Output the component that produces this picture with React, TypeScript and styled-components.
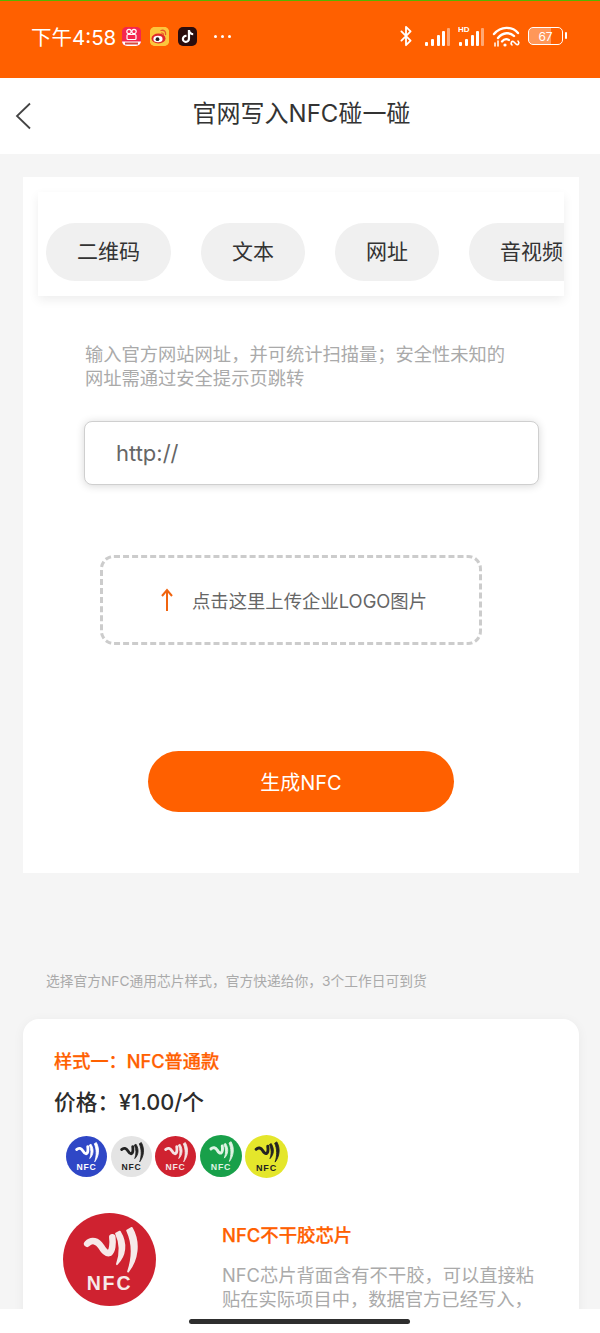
import styled, { createGlobalStyle } from "styled-components";
import { FaTiktok } from "react-icons/fa";
import { Bluetooth } from "lucide-react";

const GlobalStyle = createGlobalStyle`
  html, body {
    margin: 0;
    padding: 0;
    background: #f5f5f5;
  }
  * {
    box-sizing: border-box;
  }
  body {
    font-family: "Inter", "Noto Sans CJK SC", sans-serif;
  }
`;

const orange = "#ff6000";

const Page = styled.div`
  position: relative;
  width: 600px;
  height: 1333px;
  overflow: hidden;
  background: #f5f5f5;
`;

// status bar
const StatusBar = styled.div`
  height: 78px;
  background: ${orange};
  border-top: 1px solid #57b400;
  padding: 0 35px 7px 31px;
  display: flex;
  align-items: center;
  justify-content: space-between;
  color: #fff;
`;
const StatusLeft = styled.div`
  display: flex;
  align-items: center;
`;
const Time = styled.span`
  font-size: 20.5px;
  width: 91px;
  white-space: nowrap;
`;
const AppIcon = styled.div<{ $bg: string; $color: string }>`
  position: relative;
  overflow: hidden;
  width: 19px;
  height: 19px;
  border-radius: 5px;
  margin-right: 9px;
  background: ${(p) => p.$bg};
  color: ${(p) => p.$color};
  display: flex;
  align-items: center;
  justify-content: center;
  font-size: 13px;
`;
const More = styled.span`
  margin-left: 8px;
  display: flex;
  gap: 4px;
  i {
    width: 3px;
    height: 3px;
    border-radius: 50%;
    background: #fff;
  }
`;
const StatusRight = styled.div`
  display: flex;
  align-items: center;
  gap: 7px;
`;
const Battery = styled.div`
  width: 35px;
  height: 18px;
  border: 1.5px solid #fff;
  border-radius: 5px;
  position: relative;
  display: flex;
  align-items: center;
  justify-content: center;
  font-size: 12px;
  margin-right: 2px;
  background: linear-gradient(90deg, rgba(255, 255, 255, 0.35) 67%, transparent 67%);
  &::after {
    content: "";
    position: absolute;
    right: -5px;
    top: 4px;
    width: 2.5px;
    height: 7px;
    border-radius: 1px;
    background: #fff;
  }
`;

// nav
const NavBar = styled.div`
  position: relative;
  height: 76px;
  background: #fff;
  display: flex;
  align-items: center;
  justify-content: center;
`;
const BackIcon = styled.svg`
  position: absolute;
  left: 15px;
  top: 24px;
`;
const NavTitle = styled.h1`
  margin: 0 0 9px 3px;
  font-size: 24px;
  font-weight: 400;
  color: #333;
`;

// main card
const MainCard = styled.div`
  margin: 23px 21px 0 23px;
  height: 696px;
  background: #fff;
  padding: 15px 15px 0;
`;
const TabBar = styled.div`
  height: 104px;
  padding: 31px 0 0 8px;
  display: flex;
  gap: 30px;
  overflow: hidden;
  background: #fff;
  box-shadow: 0 4px 10px rgba(0, 0, 0, 0.07);
`;
const Tab = styled.div`
  flex: none;
  height: 58px;
  padding: 0 31px 4px;
  border-radius: 29px;
  background: #f0f0f0;
  color: #333;
  font-size: 21px;
  display: flex;
  align-items: center;
`;
const Hint = styled.p`
  margin: 46px 0 0 47px;
  width: 430px;
  font-size: 18.28px;
  line-height: 24px;
  color: #aaa;
`;
const UrlInput = styled.div`
  margin: 31px 0 0 46px;
  width: 455px;
  height: 64px;
  padding: 0 0 0 31px;
  border: 1px solid #cfcfcf;
  border-radius: 8px;
  background: #fff;
  box-shadow: 0 1px 8px rgba(0, 0, 0, 0.16);
  display: flex;
  align-items: center;
  font-size: 22px;
  color: #666;
`;
const UploadBox = styled.div`
  margin: 70px 0 0 62px;
  width: 382px;
  height: 90px;
  border: 3px dashed #cccccc;
  border-radius: 14px;
  padding-left: 58px;
  display: flex;
  align-items: center;
  gap: 19px;
  font-size: 18.35px;
  color: #666;
`;
const SubmitButton = styled.div`
  margin: 106px 0 0 110px;
  width: 306px;
  height: 61px;
  border-radius: 31px;
  background: ${orange};
  color: #fff;
  font-size: 20px;
  display: flex;
  align-items: center;
  justify-content: center;
`;

// product section
const Caption = styled.p`
  margin: 97px 0 0 46px;
  font-size: 13.75px;
  line-height: 22px;
  color: #aaa;
`;
const ProductCard = styled.div`
  margin: 27px 21px 0 23px;
  height: 400px;
  padding: 30px 18px 0 31px;
  background: #fff;
  border-radius: 16px;
  box-shadow: 0 2px 12px rgba(0, 0, 0, 0.05);
`;
const StyleName = styled.div`
  font-size: 18.2px;
  line-height: 24px;
  font-weight: 500;
  color: ${orange};
  -webkit-text-stroke: 0.25px ${orange};
`;
const Price = styled.div`
  margin-top: 14px;
  font-size: 21.7px;
  line-height: 30px;
  font-weight: 500;
  color: #2c2c2c;
`;
const Swatches = styled.div`
  margin: 17px 0 0 12px;
  height: 44px;
  display: flex;
  align-items: center;
  gap: 3.5px;
`;
const ProductRow = styled.div`
  margin-top: 35px;
  display: flex;
`;
const ProductPhoto = styled.div`
  flex: none;
  margin-left: 9px;
  width: 159px;
`;
const ProductInfo = styled.div`
  width: 316px;
  padding-top: 10px;
`;
const ProductName = styled.div`
  font-size: 18.4px;
  line-height: 24px;
  font-weight: 500;
  color: ${orange};
  -webkit-text-stroke: 0.25px ${orange};
`;
const ProductDesc = styled.p`
  margin: 16px 0 0;
  font-size: 18.3px;
  line-height: 24px;
  color: #aaa;
`;

// bottom gesture bar
const HomeBar = styled.div`
  position: absolute;
  left: 0;
  right: 0;
  bottom: 0;
  height: 24px;
  background: #fff;
  display: flex;
  justify-content: center;
  padding: 10px 1px 0 0;
`;
const HomeIndicator = styled.div`
  width: 221px;
  height: 5px;
  border-radius: 3px;
  background: #2e2e2e;
`;

function SignalIcon({ hd }: { hd?: boolean }) {
  return (
    <svg width="27" height="24" viewBox="0 0 27 24">
      {hd && (
        <text x="0" y="8" fontSize="8" fontWeight="700" fill="#fff" fontFamily="Liberation Sans, sans-serif">
          HD
        </text>
      )}
      <rect x="1" y="18" width="3" height="4" rx="1" fill="#fff" />
      <rect x="7" y="15" width="3" height="7" rx="1" fill="#fff" />
      <rect x="13" y="11" width="3" height="11" rx="1" fill="#fff" />
      <rect x="18" y="7" width="3" height="15" rx="1" fill="#fff" />
      <rect x="23" y="4" width="3" height="18" rx="1" fill="#fff" opacity="0.45" />
    </svg>
  );
}

function WifiIcon() {
  return (
    <svg width="29" height="24" viewBox="0 0 29 24" fill="none" stroke="#fff" strokeLinecap="round">
      <path d="M2 10C9 2 20 2 26 9" strokeWidth="2.4" />
      <path d="M6 14C11 8 18 8 22 12" strokeWidth="2.4" />
      <path d="M10 17.5C12 15 15 15 17 16" strokeWidth="2.2" />
      <circle cx="13" cy="21" r="1.6" fill="#fff" stroke="none" />
      <path d="M3 22v-3M6 22v-5" strokeWidth="1.5" />
      <path d="M20 21c-2-2 0-5 2-3l2 2c2 2 4-1 2-3" strokeWidth="1.6" />
    </svg>
  );
}

function KuaiIcon() {
  return (
    <svg width="19" height="19" viewBox="0 0 19 19">
      <rect width="19" height="19" fill="#f4264f" />
      <circle cx="7" cy="4.5" r="2.2" fill="none" stroke="#fff" strokeWidth="1.2" />
      <circle cx="12" cy="4.5" r="2.2" fill="none" stroke="#fff" strokeWidth="1.2" />
      <rect x="5" y="7.5" width="9" height="5" rx="1" fill="none" stroke="#fff" strokeWidth="1.2" />
      <rect x="0" y="14.5" width="19" height="4.5" fill="#fff" />
      <rect x="3" y="15.5" width="13" height="2" fill="#d94a3c" />
    </svg>
  );
}

function WeiboIcon() {
  return (
    <svg width="19" height="19" viewBox="0 0 19 19">
      <rect width="19" height="19" fill="#fcc63d" />
      <path d="M11 3.5c3-1 5 1.2 4.6 4" fill="none" stroke="#e8572a" strokeWidth="1.3" strokeLinecap="round" />
      <path d="M11.5 6c1.3-.3 2 .6 1.9 1.8" fill="none" stroke="#e8572a" strokeWidth="1.1" strokeLinecap="round" />
      <ellipse cx="8.5" cy="11.5" rx="7" ry="5" fill="#e02a2a" />
      <ellipse cx="8" cy="12" rx="4.6" ry="3.3" fill="#fff" />
      <circle cx="7.5" cy="12.2" r="1.9" fill="#222" />
    </svg>
  );
}

function NfcBadge({ size, bg, fg }: { size: number; bg: string; fg: string }) {
  return (
    <svg width={size} height={size} viewBox="0 0 100 100">
      <circle cx="50" cy="50" r="50" fill={bg} />
      <path
        d="M26 33C31 28 37 30 41 36C44 41 47 44 50 43C53 41 54 33 53 26"
        fill="none"
        stroke={fg}
        strokeWidth="7"
        strokeLinecap="round"
      />
      <g fill={fg} stroke={fg} strokeWidth="2" strokeLinejoin="round">
        <path d="M61 20C69 33 67 46 58 55C62 44 62 33 57 22Z" />
        <path d="M74 16C83 32 80 50 70 63C75 48 75 32 69 19Z" />
      </g>
      <text
        x="50"
        y="83"
        textAnchor="middle"
        fontSize="21"
        fontWeight="700"
        letterSpacing="2"
        fill={fg}
        fontFamily="Liberation Sans, sans-serif"
      >
        NFC
      </text>
    </svg>
  );
}

const badges = [
  { bg: "#2f47c6", fg: "#fff", size: 41 },
  { bg: "#e4e4e4", fg: "#222", size: 41 },
  { bg: "#cf2230", fg: "#f4e4e4", size: 41 },
  { bg: "#18a04a", fg: "#dff3e4", size: 42 },
  { bg: "#e4e62b", fg: "#222", size: 43 },
];

const tabs = ["二维码", "文本", "网址", "音视频"];

function App() {
  return (
    <Page>
      <GlobalStyle />
      <StatusBar>
        <StatusLeft>
          <Time>下午4:58</Time>
          <AppIcon $bg="#f4264f" $color="#fff">
            <KuaiIcon />
          </AppIcon>
          <AppIcon $bg="#fcc63d" $color="#e02a2a">
            <WeiboIcon />
          </AppIcon>
          <AppIcon $bg="#2a0d0d" $color="#fff">
            <FaTiktok />
          </AppIcon>
          <More>
            <i />
            <i />
            <i />
          </More>
        </StatusLeft>
        <StatusRight>
          <Bluetooth size={22} color="#fff" strokeWidth={2} />
          <SignalIcon />
          <SignalIcon hd />
          <WifiIcon />
          <Battery>67</Battery>
        </StatusRight>
      </StatusBar>

      <NavBar>
        <BackIcon width="18" height="28" viewBox="0 0 18 28" fill="none" stroke="#444" strokeWidth="1.8">
          <path d="M15 1.5L2 14L15 26.5" />
        </BackIcon>
        <NavTitle>官网写入NFC碰一碰</NavTitle>
      </NavBar>

      <MainCard>
        <TabBar>
          {tabs.map((tab) => (
            <Tab key={tab}>{tab}</Tab>
          ))}
        </TabBar>
        <Hint>输入官方网站网址，并可统计扫描量；安全性未知的网址需通过安全提示页跳转</Hint>
        <UrlInput>http://</UrlInput>
        <UploadBox>
          <svg width="12" height="24" viewBox="0 0 12 24" fill="none" stroke="#f0640f" strokeWidth="2">
            <path d="M6 23V2M1 8L6 2L11 8" />
          </svg>
          点击这里上传企业LOGO图片
        </UploadBox>
        <SubmitButton>生成NFC</SubmitButton>
      </MainCard>

      <Caption>选择官方NFC通用芯片样式，官方快递给你，3个工作日可到货</Caption>

      <ProductCard>
        <StyleName>样式一：NFC普通款</StyleName>
        <Price>价格：¥1.00/个</Price>
        <Swatches>
          {badges.map((b) => (
            <NfcBadge key={b.bg} size={b.size} bg={b.bg} fg={b.fg} />
          ))}
        </Swatches>
        <ProductRow>
          <ProductPhoto>
            <NfcBadge size={93} bg="#cf2230" fg="#f6e9e9" />
          </ProductPhoto>
          <ProductInfo>
            <ProductName>NFC不干胶芯片</ProductName>
            <ProductDesc>NFC芯片背面含有不干胶，可以直接粘贴在实际项目中，数据官方已经写入，</ProductDesc>
          </ProductInfo>
        </ProductRow>
      </ProductCard>

      <HomeBar>
        <HomeIndicator />
      </HomeBar>
    </Page>
  );
}

export default App;
